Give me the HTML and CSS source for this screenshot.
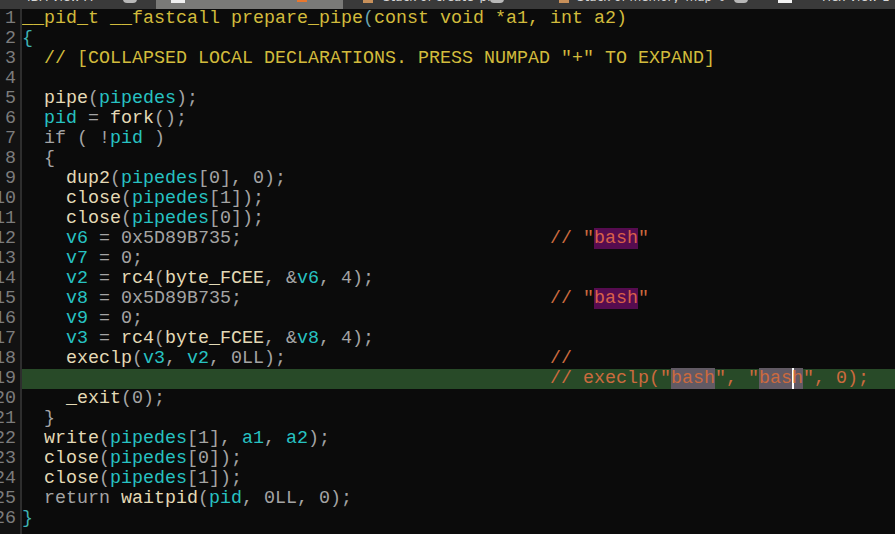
FILE: index.html
```html
<!DOCTYPE html>
<html>
<head>
<meta charset="utf-8">
<link rel="stylesheet" href="styles.css">
</head>
<body>
<div class="tabs">
  <div class="tab t1"><span class="tlabel l1">IDA View-A</span><span class="tclose c1"></span></div>
  <div class="tab t2 active"><span class="ticon white i2"></span><span class="tclose orange c2"></span></div>
  <div class="tab t3"><span class="ticon brown i3"></span><span class="tlabel l3">Stack of create_pid</span><span class="tclose c3"></span></div>
  <div class="tab t4"><span class="ticon brown i4"></span><span class="tlabel l4">Stack of memory_map_0</span><span class="tclose c4"></span></div>
  <div class="tab t5"><span class="ticon white i5"></span><span class="tlabel l5">Hex View-1</span></div>
</div>
<div class="editor">
  <div class="gutter">
    <div class="nums">
      <div>1</div><div>2</div><div>3</div><div>4</div><div>5</div><div>6</div><div>7</div><div>8</div><div>9</div><div>10</div>
      <div>11</div><div>12</div><div>13</div><div>14</div><div>15</div><div>16</div><div>17</div><div>18</div><div>19</div><div>20</div>
      <div>21</div><div>22</div><div>23</div><div>24</div><div>25</div><div>26</div>
    </div>
  </div>
  <div class="code">
<div class="ln"><span class="y">__pid_t __fastcall prepare_pipe</span><span class="pt">(</span><span class="y">const void *a1, int a2)</span></div>
<div class="ln"><span class="br">{</span></div>
<div class="ln">  <span class="y">// [COLLAPSED LOCAL DECLARATIONS. PRESS NUMPAD "+" TO EXPAND]</span></div>
<div class="ln"> </div>
<div class="ln">  <span class="f">pipe</span>(<span class="v">pipedes</span>);</div>
<div class="ln">  <span class="v">pid</span> = <span class="f">fork</span>();</div>
<div class="ln">  if ( !<span class="v">pid</span> )</div>
<div class="ln">  {</div>
<div class="ln">    <span class="f">dup2</span>(<span class="v">pipedes</span>[0], 0);</div>
<div class="ln">    <span class="f">close</span>(<span class="v">pipedes</span>[1]);</div>
<div class="ln">    <span class="f">close</span>(<span class="v">pipedes</span>[0]);</div>
<div class="ln">    <span class="v">v6</span> = 0x5D89B735;                            <span class="c">// "<span class="s">bash</span>"</span></div>
<div class="ln">    <span class="v">v7</span> = 0;</div>
<div class="ln">    <span class="v">v2</span> = <span class="f">rc4</span>(<span class="f">byte_FCEE</span>, &amp;<span class="v">v6</span>, 4);</div>
<div class="ln">    <span class="v">v8</span> = 0x5D89B735;                            <span class="c">// "<span class="s">bash</span>"</span></div>
<div class="ln">    <span class="v">v9</span> = 0;</div>
<div class="ln">    <span class="v">v3</span> = <span class="f">rc4</span>(<span class="f">byte_FCEE</span>, &amp;<span class="v">v8</span>, 4);</div>
<div class="ln">    <span class="f">execlp</span>(<span class="v">v3</span>, <span class="v">v2</span>, 0LL);                        <span class="c">//</span></div>
<div class="ln hl">                                                <span class="c">// execlp("<span class="g">bash</span>", "<span class="g">bas<span class="cur">h</span></span>", 0);</span></div>
<div class="ln">    <span class="f">_exit</span>(0);</div>
<div class="ln">  }</div>
<div class="ln">  <span class="f">write</span>(<span class="v">pipedes</span>[1], <span class="v">a1</span>, <span class="v">a2</span>);</div>
<div class="ln">  <span class="f">close</span>(<span class="v">pipedes</span>[0]);</div>
<div class="ln">  <span class="f">close</span>(<span class="v">pipedes</span>[1]);</div>
<div class="ln">  return <span class="f">waitpid</span>(<span class="v">pid</span>, 0LL, 0);</div>
<div class="ln"><span class="br">}</span></div>
  </div>
</div>
</body>
</html>
```
FILE: styles.css
```css
html, body {
  margin: 0;
  padding: 0;
  background: #0b0b0b;
  overflow: hidden;
}
body {
  width: 895px;
  height: 534px;
}
.tabs {
  display: flex;
  height: 9px;
  overflow: hidden;
  background: #3a3a3a;
  font-family: "DejaVu Sans", sans-serif;
  font-size: 12px;
  line-height: 12px;
  color: #d8d8d8;
}
.tab {
  display: flex;
  align-items: flex-start;
  height: 9px;
  overflow: hidden;
  flex: none;
}
.t1 { width: 156px; }
.t2 { width: 187px; background: #7a7a78; }
.t3 { width: 207px; }
.t4 { width: 213px; }
.t5 { flex: 1; }
.tlabel {
  margin-top: -9px;
  white-space: nowrap;
  flex: none;
}
.l1 { margin-left: 27px; width: 96px; }
.l3 { margin-left: 10px; width: 107px; overflow: hidden; }
.l4 { margin-left: 8px; width: 157px; overflow: hidden; }
.l5 { margin-left: 30px; }
.tclose {
  flex: none;
  width: 14px;
  height: 4px;
  margin-top: -1px;
  border-radius: 0 0 4px 4px;
  background: #b8b8b8;
}
.c1 { margin-left: 0; }
.c2 { margin-left: 112px; width: 10px; }
.c3 { margin-left: 0; }
.c4 { margin-left: 0; }
.tclose.orange { background: #e8772e; height: 3px; border-radius: 0; }
.ticon {
  flex: none;
  height: 4px;
  margin-top: -1px;
}
.ticon.white { background: #f2f2f2; width: 14px; }
.ticon.brown { background: #c8905a; width: 10px; }
.i2 { margin-left: 15px; }
.i3 { margin-left: 20px; }
.i4 { margin-left: 9px; }
.i5 { margin-left: 15px; }

.editor {
  display: flex;
  height: 525px;
}
.gutter {
  width: 20px;
  flex: none;
  overflow: hidden;
  background: #121212;
  border-right: 2px solid #2e2e2e;
}
.nums {
  width: 40px;
  margin-left: -24px;
  padding-right: 4px;
  text-align: right;
  font-family: "Liberation Mono", "Courier New", monospace;
  font-size: 18.33px;
  line-height: 20px;
  color: #7c7c7c;
}
.nums div { height: 20px; }
.code {
  flex: 1;
  overflow: hidden;
  font-family: "Liberation Mono", "Courier New", monospace;
  font-size: 18.33px;
  line-height: 20px;
  color: #a4a4a4;
}
.ln {
  height: 20px;
  white-space: pre;
}
.hl { background: #284a28; }
.y { color: #d2bb3c; }
.pt { color: #6aa4b0; }
.br { color: #3fb3b3; }
.f { color: #e4dab6; }
.v { color: #27c2c2; }
.c { color: #cc6a3e; }
.s { background: #560c50; color: #d9604a; }
.g { background: #625a64; }
.cur { box-shadow: inset 2px 0 0 #ffffff; }
```
